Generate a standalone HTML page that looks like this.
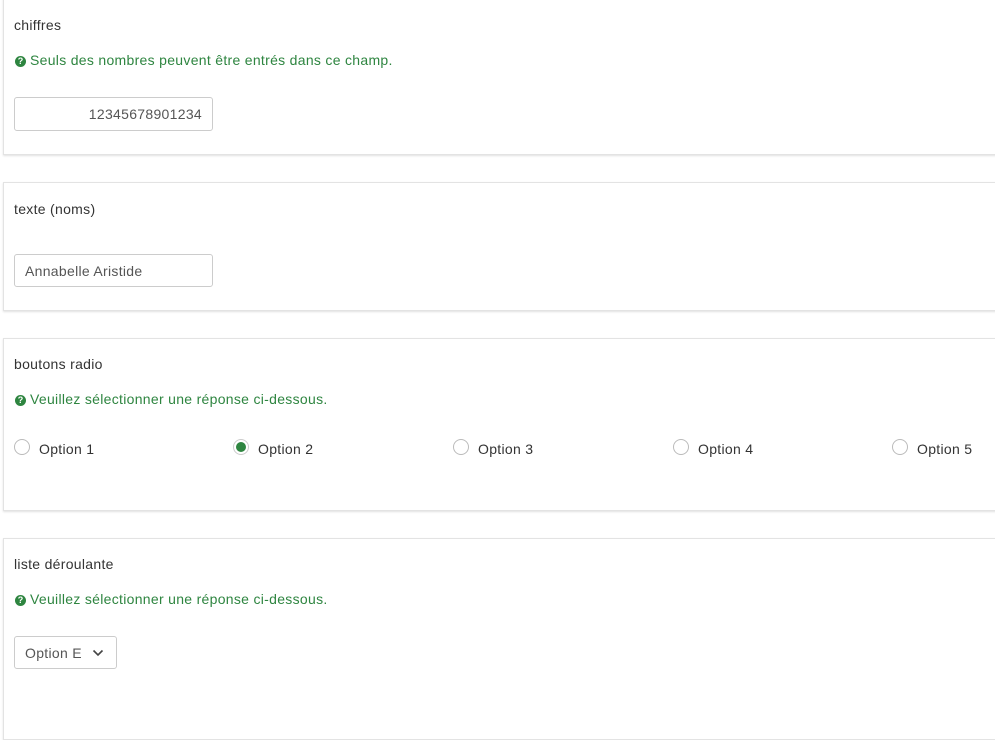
<!DOCTYPE html>
<html><head><meta charset="utf-8"><style>
body{margin:0;width:995px;height:703px;overflow:hidden;background:#fff;font-family:"Liberation Sans",sans-serif;font-size:14px;color:#333;position:relative;letter-spacing:0.3px}
.p{position:absolute;left:3px;width:1000px;border:1px solid #e3e3e3;box-shadow:0 1px 2px rgba(0,0,0,.12);background:#fff}
.a{position:absolute;white-space:nowrap}
.h{color:#2e8540}
.q{display:inline-block;width:11px;height:11px;border-radius:50%;background:#2e8540;color:#fff;font-size:9px;font-weight:bold;text-align:center;line-height:11px;vertical-align:1px;margin-right:4px;letter-spacing:0}
.in{position:absolute;border:1px solid #ccc;border-radius:3px;background:#fff;box-sizing:border-box}
.r{position:absolute;width:16px;height:16px;border:1px solid #bbb;border-radius:50%;box-sizing:border-box;background:#fff}
</style></head><body>
<div class="p" style="top:-2px;height:155px"></div>
<div class="p" style="top:182px;height:127px"></div>
<div class="p" style="top:338px;height:171px"></div>
<div class="p" style="top:538px;height:200px"></div>

<div class="a" style="left:14px;top:17px">chiffres</div>
<div class="a h" style="left:15px;top:52px"><span class="q">?</span>Seuls des nombres peuvent être entrés dans ce champ.</div>
<div class="in" style="left:14px;top:97px;width:199px;height:34px"><span class="a" style="right:10px;top:8px;color:#555">12345678901234</span></div>

<div class="a" style="left:14px;top:201px">texte (noms)</div>
<div class="in" style="left:14px;top:254px;width:199px;height:33px"><span class="a" style="left:10px;top:8px;color:#555">Annabelle Aristide</span></div>

<div class="a" style="left:14px;top:356px">boutons radio</div>
<div class="a h" style="left:15px;top:391px"><span class="q">?</span>Veuillez sélectionner une réponse ci-dessous.</div>
<div class="r" style="left:14px;top:439px"></div><div class="a" style="left:39px;top:441px">Option 1</div>
<div class="r" style="left:233px;top:439px;border-color:#ccc"><div style="position:absolute;left:2px;top:2px;width:10px;height:10px;border-radius:50%;background:#2e8540"></div></div><div class="a" style="left:258px;top:441px">Option 2</div>
<div class="r" style="left:453px;top:439px"></div><div class="a" style="left:478px;top:441px">Option 3</div>
<div class="r" style="left:673px;top:439px"></div><div class="a" style="left:698px;top:441px">Option 4</div>
<div class="r" style="left:892px;top:439px"></div><div class="a" style="left:917px;top:441px">Option 5</div>

<div class="a" style="left:14px;top:556px">liste déroulante</div>
<div class="a h" style="left:15px;top:591px"><span class="q">?</span>Veuillez sélectionner une réponse ci-dessous.</div>
<div class="in" style="left:14px;top:636px;width:103px;height:33px"><span class="a" style="left:10px;top:8px;color:#555">Option E</span>
<svg class="a" style="left:77px;top:12px" width="12" height="8" viewBox="0 0 12 8"><path d="M1.5 1.5 L6 6 L10.5 1.5" fill="none" stroke="#444" stroke-width="1.6"/></svg></div>
</body></html>
